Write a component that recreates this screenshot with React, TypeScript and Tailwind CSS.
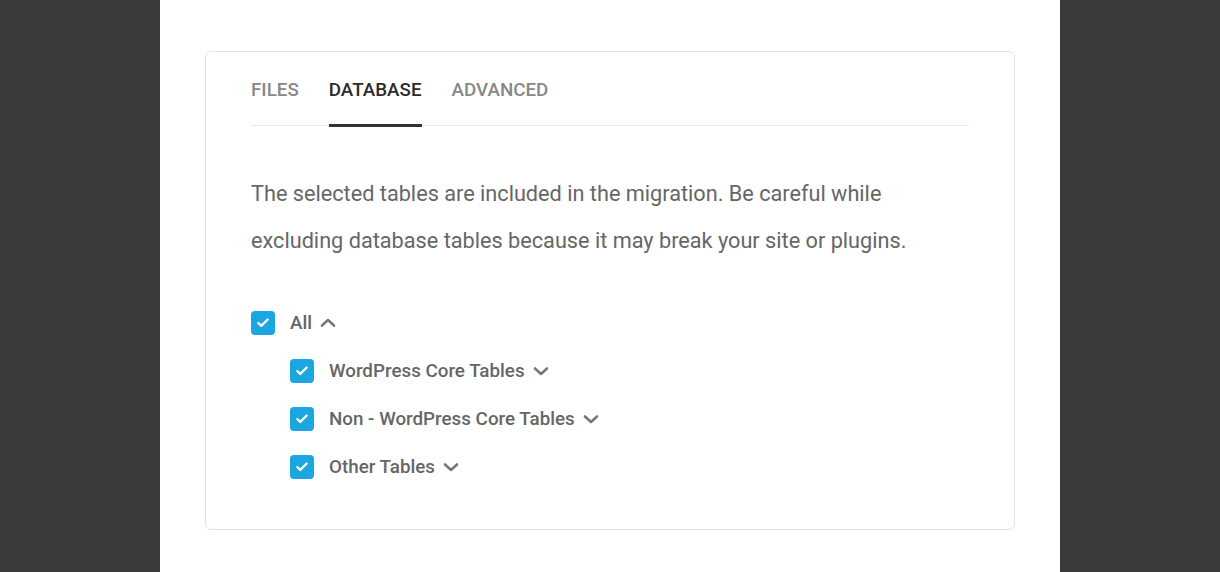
import { Check } from 'lucide-react';

const tabs = ['FILES', 'DATABASE', 'ADVANCED'];

const children = ['WordPress Core Tables', 'Non - WordPress Core Tables', 'Other Tables'];

function Box() {
  return (
    <span className="w-6 h-6 rounded-[4px] bg-[#1ba6e2] flex items-center justify-center shrink-0">
      <Check className="w-3.5 h-3.5 text-white" strokeWidth={4} />
    </span>
  );
}

function Chevron({ up }: { up?: boolean }) {
  return (
    <svg
      viewBox="0 0 16 10"
      className={'ml-[8px] w-4 h-[10px] text-[#777] ' + (up ? 'rotate-180' : '')}
      fill="none"
      stroke="currentColor"
      strokeWidth={2.6}
      strokeLinecap="round"
      strokeLinejoin="round"
    >
      <path d="M2 2.5 L8 8 L14 2.5" />
    </svg>
  );
}

function Row({ label, open }: { label: string; open?: boolean }) {
  return (
    <div className="h-12 flex items-center">
      <Box />
      <span className="ml-[15px] text-[18.8px] font-medium text-[#666]">{label}</span>
      <Chevron up={open} />
    </div>
  );
}

export default function App() {
  return (
    <div className="w-full h-[572px] bg-[#3b3b3b] flex justify-center font-['Roboto',sans-serif]">
      <div className="w-[900px] h-full bg-white pt-[51px] px-[45px]">
        <div className="border border-[#e3e3e3] rounded-[6px] px-[45px] pt-[26px] pb-[38px]">
          <div className="flex gap-[30px] border-b border-[#e8e8e8]">
            {tabs.map((t) => (
              <button
                key={t}
                type="button"
                className={
                  'pb-[22px] -mb-[2px] text-[18.8px] leading-[24px] font-medium border-b-[3px] ' +
                  (t === 'DATABASE' ? 'text-[#2b2b2b] border-[#333]' : 'text-[#888] border-transparent')
                }
              >
                {t}
              </button>
            ))}
          </div>
          <p className="mt-[44px] text-[21.7px] leading-[47px] text-[#666]">
            The selected tables are included in the migration. Be careful while
            <br />
            excluding database tables because it may break your site or plugins.
          </p>
          <div className="mt-[35px]">
            <Row label="All" open />
            <div className="pl-[39px]">
              {children.map((c) => (
                <Row key={c} label={c} />
              ))}
            </div>
          </div>
        </div>
      </div>
    </div>
  );
}
